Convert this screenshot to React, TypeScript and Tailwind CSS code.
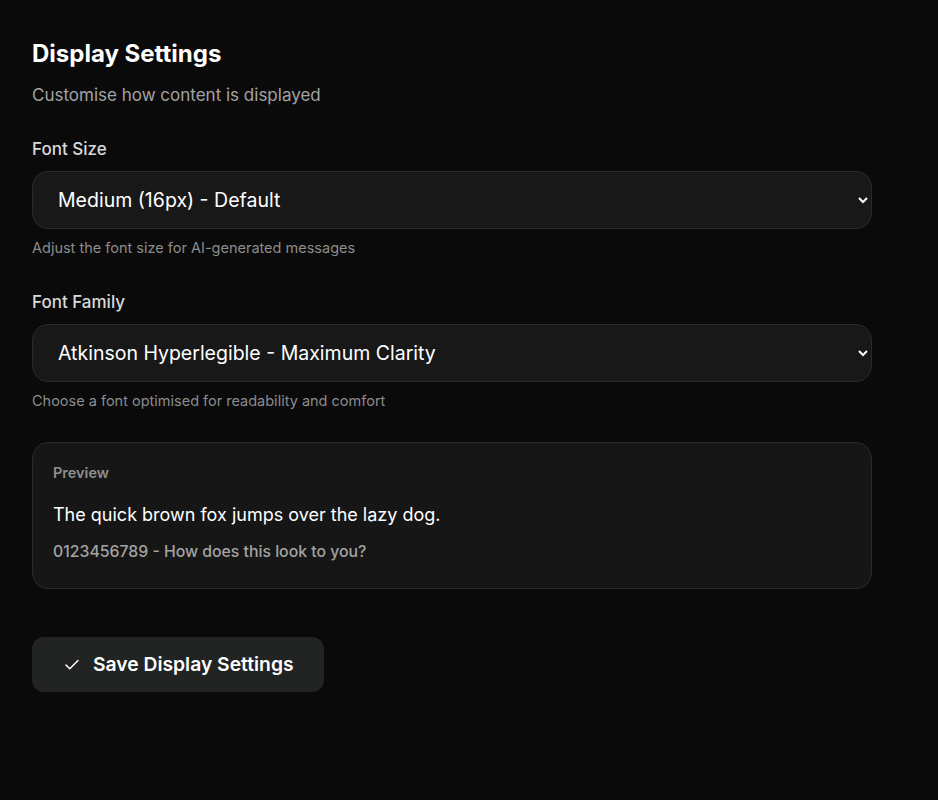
import { Check } from "lucide-react";

export default function App() {
  return (
    <div className="min-h-[800px] w-full bg-[#0a0a0a] font-['Inter',sans-serif] text-white">
      <div className="w-[840px] pl-8 pt-[38px] box-content">
        <h1 className="text-2xl font-bold leading-8 text-white">Display Settings</h1>
        <p className="mt-[13px] text-[17px] leading-6 text-[#a3a3a3]">Customise how content is displayed</p>

        <div className="mt-[30px]">
          <label className="block text-[17px] font-medium leading-6 text-[#d9d9d9]">Font Size</label>
          <select
            defaultValue="medium"
            className="mt-[10px] h-[58px] w-full rounded-2xl border border-[#2a2a2a] bg-[#181818] pl-[21px] pr-3 text-[19.5px] text-white [color-scheme:dark] outline-none"
          >
            <option value="small">Small (14px)</option>
            <option value="medium">Medium (16px) - Default</option>
            <option value="large">Large (18px)</option>
          </select>
          <p className="mt-[9px] text-[14.5px] leading-5 text-[#8c8c8c]">Adjust the font size for AI-generated messages</p>
        </div>

        <div className="mt-[32px]">
          <label className="block text-[17px] font-medium leading-6 text-[#d9d9d9]">Font Family</label>
          <select
            defaultValue="atkinson"
            className="mt-[10px] h-[58px] w-full rounded-2xl border border-[#2a2a2a] bg-[#181818] pl-[21px] pr-3 text-[19.5px] text-white [color-scheme:dark] outline-none"
          >
            <option value="inter">Inter - Modern</option>
            <option value="atkinson">Atkinson Hyperlegible - Maximum Clarity</option>
            <option value="open">Open Sans - Friendly</option>
          </select>
          <p className="mt-[9px] text-[14.5px] leading-5 text-[#8c8c8c]">Choose a font optimised for readability and comfort</p>
        </div>

        <div className="mt-[31px] rounded-2xl border border-[#2a2a2a] bg-[#161616] px-5 pt-[20px] pb-[24px]">
          <div className="text-[14.5px] font-semibold leading-5 text-[#8f8f8f]">Preview</div>
          <p className="mt-[18px] text-[18px] leading-7 text-white">The quick brown fox jumps over the lazy dog.</p>
          <p className="mt-[11px] text-[15.8px] font-medium leading-6 text-[#a3a3a3]">0123456789 - How does this look to you?</p>
        </div>

        <button className="mt-[48px] flex h-[55px] items-center gap-[12px] rounded-xl bg-[#222424] pl-[31px] pr-[30px] text-[19.3px] font-semibold text-white">
          <Check size={18} strokeWidth={2} />
          Save Display Settings
        </button>
      </div>
    </div>
  );
}
